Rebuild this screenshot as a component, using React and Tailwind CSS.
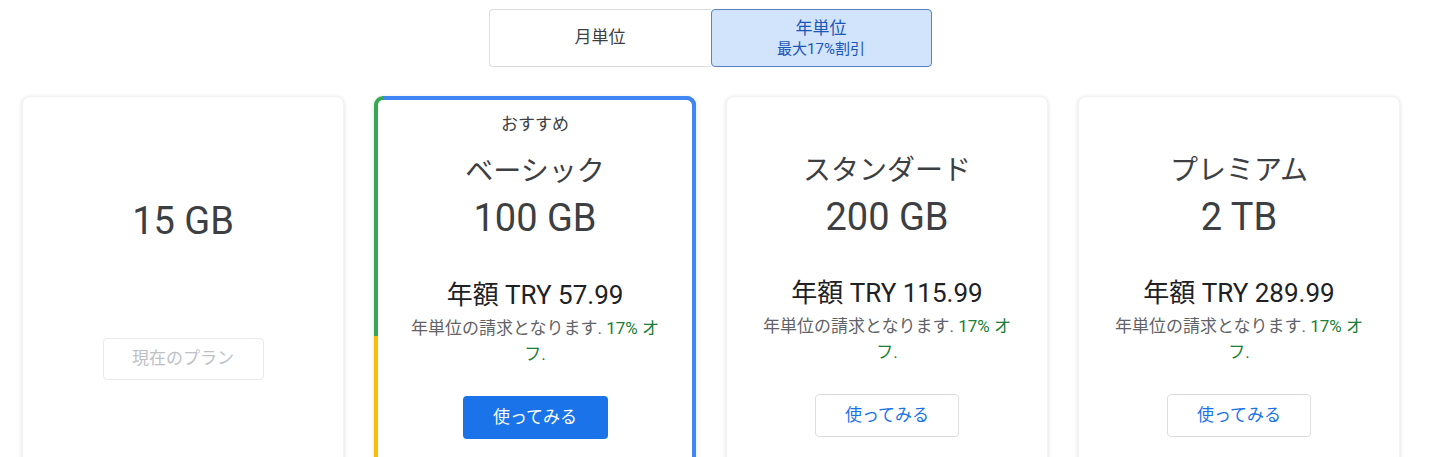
import React from "react";

const FONT = { fontFamily: 'Roboto, "Noto Sans CJK JP", sans-serif' };

function Desc() {
  return (
    <div className="mt-[4px] text-[17px] leading-[26px] text-[#5f6368]">
      年単位の請求となります. <span className="text-[#188038]">17% オ</span>
      <br />
      <span className="text-[#188038]">フ.</span>
    </div>
  );
}

function PlanCard({ title, size, price, featured }) {
  const base =
    "relative w-[322px] h-[380px] shrink-0 bg-white rounded-[8px] flex flex-col items-center text-center";
  if (featured) {
    return (
      <div className="w-[322px] h-[380px] shrink-0 rounded-[9px] p-[4px] shadow-[0_1px_4px_rgba(60,64,67,0.18)] bg-[linear-gradient(to_bottom,#34a853_0,#34a853_240px,#fbbc04_240px,#fbbc04_100%)] relative">
        <div className="absolute inset-0 rounded-[9px] border-t-[4px] border-r-[4px] border-[#4285f4] pointer-events-none [clip-path:inset(0_0_0_10px)]"></div>
        <div className="w-full h-full bg-white rounded-[5px] flex flex-col items-center text-center">
          <div className="mt-[14px] h-[20px] text-[17px] leading-[20px] text-[#3c4043]">おすすめ</div>
          <div className="mt-[20px] text-[28px] leading-[36px] text-[#3c4043]">{title}</div>
          <div className="mt-[6px] text-[38px] leading-[44px] text-[#3c4043]">{size}</div>
          <div className="mt-[39px] text-[26px] leading-[32px] text-[#202124]">{price}</div>
          <Desc />
          <button className="mt-[29px] h-[43px] w-[145px] rounded-[4px] bg-[#1a73e8] text-white text-[17px]">
            使ってみる
          </button>
        </div>
      </div>
    );
  }
  return (
    <div className={base + " border border-[#f1f3f4] shadow-[0_1px_4px_rgba(60,64,67,0.18)]"}>
      <div className="mt-[14px] h-[20px]"></div>
      {title ? (
        <>
          <div className="mt-[22px] text-[28px] leading-[36px] text-[#3c4043]">{title}</div>
          <div className="mt-[6px] text-[38px] leading-[44px] text-[#3c4043]">{size}</div>
          <div className="mt-[38px] text-[26px] leading-[32px] text-[#202124]">{price}</div>
          <Desc />
          <button className="mt-[29px] h-[43px] w-[144px] rounded-[4px] border border-[#dadce0] bg-white text-[#1a73e8] text-[17px]">
            使ってみる
          </button>
        </>
      ) : (
        <>
          <div className="mt-[68px] text-[38px] leading-[44px] text-[#3c4043]">{size}</div>
          <button className="mt-[95px] h-[42px] w-[161px] rounded-[4px] border border-[#e8eaed] bg-white text-[#bdc1c6] text-[17px]">
            現在のプラン
          </button>
        </>
      )}
    </div>
  );
}

export default function App() {
  return (
    <div className="w-[1430px] h-[457px] bg-white overflow-hidden" style={FONT}>
      <div className="w-[1420px] flex flex-col items-center">
        <div className="mt-[9px] flex h-[58px]">
          <div className="w-[222px] h-[58px] border border-[#dadce0] border-r-0 rounded-l-[4px] flex items-center justify-center text-[17px] text-[#3c4043]">
            月単位
          </div>
          <div className="w-[221px] h-[58px] border border-[#5b7fc9] bg-[#d2e3fc] rounded-[4px] flex flex-col items-center justify-center text-[#1a56b8]">
            <div className="text-[17px] leading-[22px]">年単位</div>
            <div className="text-[15px] leading-[20px]">最大17%割引</div>
          </div>
        </div>
        <div className="mt-[29px] flex gap-[30px] pl-[2px]">
          <PlanCard size="15 GB" />
          <PlanCard title="ベーシック" size="100 GB" price="年額 TRY 57.99" featured />
          <PlanCard title="スタンダード" size="200 GB" price="年額 TRY 115.99" />
          <PlanCard title="プレミアム" size="2 TB" price="年額 TRY 289.99" />
        </div>
      </div>
    </div>
  );
}
